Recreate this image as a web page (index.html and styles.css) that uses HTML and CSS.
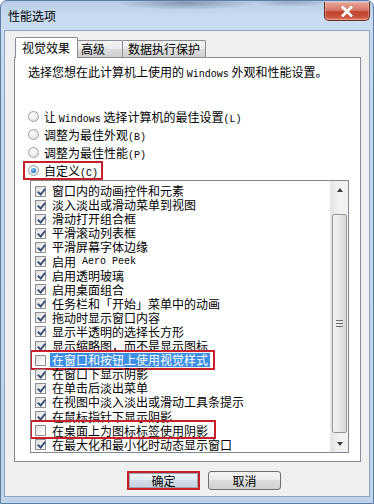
FILE: index.html
```html
<!DOCTYPE html>
<html lang="zh-CN">
<head>
<meta charset="utf-8">
<title>性能选项</title>
<link rel="stylesheet" href="styles.css">
</head>
<body>
<div class="window">
  <div class="titlebar">
    <span class="title">性能选项</span>
    <div class="close">
      <svg width="16" height="11" viewBox="0 0 16 11"><path d="M4 1.5 L12 9.5 M12 1.5 L4 9.5" stroke="#fff" stroke-width="2.8" stroke-linecap="square"/></svg>
    </div>
  </div>
  <div class="client">
    <div class="tabs">
      <div class="tab active">视觉效果</div>
      <div class="tab t2">高级</div>
      <div class="tab t3">数据执行保护</div>
    </div>
    <div class="panel">
      <p class="intro">选择您想在此计算机上使用的 <span class="en">Windows</span> 外观和性能设置。</p>
      <div class="radios">
        <div class="radio-row"><span class="radio"></span><span>让 <span class="en">Windows</span> 选择计算机的最佳设置<span class="en">(L)</span></span></div>
        <div class="radio-row"><span class="radio"></span><span>调整为最佳外观<span class="en">(B)</span></span></div>
        <div class="radio-row"><span class="radio"></span><span>调整为最佳性能<span class="en">(P)</span></span></div>
        <div class="radio-row marked"><span class="radio on"></span><span>自定义<span class="en">(C)</span></span></div>
      </div>
      <div class="listbox">
        <ul class="items">
          <li><span class="cb on"></span>窗口内的动画控件和元素</li>
          <li><span class="cb on"></span>淡入淡出或滑动菜单到视图</li>
          <li><span class="cb on"></span>滑动打开组合框</li>
          <li><span class="cb on"></span>平滑滚动列表框</li>
          <li><span class="cb on"></span>平滑屏幕字体边缘</li>
          <li><span class="cb on"></span>启用 <span class="en">Aero Peek</span></li>
          <li><span class="cb on"></span>启用透明玻璃</li>
          <li><span class="cb on"></span>启用桌面组合</li>
          <li><span class="cb on"></span>任务栏和「开始」菜单中的动画</li>
          <li><span class="cb on"></span>拖动时显示窗口内容</li>
          <li><span class="cb on"></span>显示半透明的选择长方形</li>
          <li><span class="cb on"></span>显示缩略图，而不是显示图标</li>
          <li class="marked"><span class="cb"></span><span class="sel">在窗口和按钮上使用视觉样式</span></li>
          <li><span class="cb on"></span>在窗口下显示阴影</li>
          <li><span class="cb on"></span>在单击后淡出菜单</li>
          <li><span class="cb on"></span>在视图中淡入淡出或滑动工具条提示</li>
          <li><span class="cb on"></span>在鼠标指针下显示阴影</li>
          <li class="marked m2"><span class="cb"></span>在桌面上为图标标签使用阴影</li>
          <li><span class="cb on"></span>在最大化和最小化时动态显示窗口</li>
        </ul>
        <div class="scrollbar">
          <div class="sb-btn"><span class="arrow up"></span></div>
          <div class="sb-track">
            <div class="thumb"><span class="grip"></span></div>
          </div>
          <div class="sb-btn"><span class="arrow down"></span></div>
        </div>
      </div>
    </div>
    <div class="buttons">
      <button class="btn default">确定</button>
      <button class="btn">取消</button>
    </div>
  </div>
</div>
</body>
</html>
```
FILE: styles.css
```css
html, body {
  margin: 0;
  padding: 0;
}
body {
  width: 374px;
  height: 504px;
  overflow: hidden;
  font-family: "Noto Sans CJK SC", "Noto Sans", sans-serif;
  font-size: 12px;
  color: #000;
  background: #fff;
}
.window {
  box-sizing: border-box;
  width: 374px;
  height: 504px;
  border: 1px solid #5d7da6;
  border-radius: 7px 7px 0 0;
  background:
    radial-gradient(ellipse 70px 7px at 185px 2px, rgba(70,85,110,0.45), rgba(70,85,110,0) 100%),
    radial-gradient(ellipse 40px 5px at 290px 1px, rgba(70,85,110,0.3), rgba(70,85,110,0) 100%),
    linear-gradient(to bottom, #b7cde6 0px, #cadcf0 18px, #c3d7ee 60px, #bed3ec 100%);
  padding: 0 3px 6px 3px;
  display: flex;
  flex-direction: column;
}
.titlebar {
  height: 29px;
  display: flex;
  justify-content: space-between;
  align-items: flex-start;
  flex-shrink: 0;
}
.title {
  align-self: center;
  margin-left: 4px;
  line-height: 16px;
  margin-top: 1px;
}
.close {
  margin-top: 1px;
  width: 46px;
  height: 19px;
  box-sizing: border-box;
  border: 1px solid #6e2c25;
  border-top: none;
  border-radius: 0 0 5px 5px;
  background: linear-gradient(to bottom, #e6a699 0%, #d77868 45%, #c2432f 55%, #c9553f 85%, #dc8a6f 100%);
  display: flex;
  align-items: center;
  justify-content: center;
  box-shadow: inset 0 0 0 1px rgba(255,210,200,0.35);
}
.client {
  flex: 1;
  background: #f0f0f0;
  border: 1px solid #8ea4c1;
  padding: 6px 0 0 0;
  display: flex;
  flex-direction: column;
}
.tabs {
  display: flex;
  align-items: flex-end;
  height: 20px;
  margin-left: 10px;
  position: relative;
  z-index: 1;
}
.tab {
  box-sizing: border-box;
  height: 17px;
  border: 1px solid #898c95;
  border-bottom: none;
  border-radius: 2px 2px 0 0;
  line-height: 15px;
  background: linear-gradient(to bottom, #f3f3f3 0%, #ebebeb 50%, #dddddd 50%, #cfcfcf 100%);
  white-space: nowrap;
}
.tab.active {
  height: 21px;
  width: 63px;
  margin-bottom: -1px;
  background: #fff;
  padding-left: 6px;
  line-height: 20px;
}
.tab.t2 {
  width: 46px;
  margin-left: -1px;
  padding-left: 3px;
}
.tab.t3 {
  width: 84px;
  margin-left: -1px;
  padding-left: 5px;
}
.panel {
  box-sizing: border-box;
  height: 405px;
  margin: 0 8px 0 9px;
  border: 1px solid #898c95;
  background: #fff;
  display: flex;
  flex-direction: column;
  flex-shrink: 0;
}
.intro {
  margin: 6px 0 0 13px;
  line-height: 16px;
  white-space: nowrap;
}
.en {
  font-family: "Liberation Mono", monospace;
  font-size: 10px;
}
.radios {
  margin: 24px 0 0 13px;
  display: flex;
  flex-direction: column;
  align-items: flex-start;
}
.radio-row {
  height: 18px;
  display: flex;
  align-items: center;
  gap: 5px;
  position: relative;
  white-space: nowrap;
}
.radio-row.marked::after {
  content: "";
  position: absolute;
  left: -5px;
  right: -5px;
  top: 0;
  bottom: -1px;
  border: 2px solid #c8202b;
}
.radio {
  box-sizing: border-box;
  width: 11px;
  height: 11px;
  border-radius: 50%;
  border: 1px solid #9a9ea3;
  background: radial-gradient(circle at 40% 35%, #ffffff 0%, #eef0f2 40%, #d6d9dd 100%);
  position: relative;
  flex-shrink: 0;
}
.radio.on::after {
  content: "";
  position: absolute;
  left: 2px;
  top: 2px;
  width: 5px;
  height: 5px;
  border-radius: 50%;
  background: radial-gradient(circle at 40% 35%, #8fd0ff 0%, #2a7bd0 60%, #174f95 100%);
}
.listbox {
  box-sizing: border-box;
  height: 273px;
  margin: 1px 11px 0 15px;
  border: 1px solid #828790;
  display: flex;
  background: #fff;
}
.items {
  flex: 1;
  list-style: none;
  margin: 0;
  padding: 3px 0 0 4px;
  display: flex;
  flex-direction: column;
  align-items: flex-start;
  overflow: hidden;
}
.items li {
  height: 14.1px;
  line-height: 14px;
  display: flex;
  align-items: center;
  gap: 6px;
  position: relative;
  white-space: nowrap;
  flex-shrink: 0;
}
.items li.marked::after {
  content: "";
  position: absolute;
  left: -5px;
  right: -5px;
  top: -3px;
  bottom: -3px;
  border: 2px solid #c8202b;
}
.items li.m2::after {
  top: -4px;
  bottom: -1px;
  right: -8px;
}
.sel {
  background: #3d8fe3;
  color: #fff;
  margin-left: -2px;
  padding: 0 2px;
}
.cb {
  box-sizing: border-box;
  width: 11px;
  height: 11px;
  border: 1px solid #8f8f8f;
  background: linear-gradient(135deg, #dcdcdc 0%, #f4f4f4 60%, #ffffff 100%);
  position: relative;
  flex-shrink: 0;
}
.cb.on::after {
  content: "";
  position: absolute;
  left: 3px;
  top: 0px;
  width: 3px;
  height: 6px;
  border: solid #3f5178;
  border-width: 0 2px 2px 0;
  transform: rotate(40deg);
}
.scrollbar {
  width: 17px;
  display: flex;
  flex-direction: column;
  background: linear-gradient(to right, #e3e3e3, #f1f1f1 40%, #f1f1f1);
  border-left: 1px solid #e8e8e8;
}
.sb-btn {
  height: 17px;
  display: flex;
  align-items: center;
  justify-content: center;
  flex-shrink: 0;
}
.arrow {
  width: 0;
  height: 0;
  border-left: 3.5px solid transparent;
  border-right: 3.5px solid transparent;
}
.arrow.up {
  border-bottom: 4px solid #3c3c3c;
}
.arrow.down {
  border-top: 4px solid #3c3c3c;
}
.sb-track {
  flex: 1;
  padding: 16px 1px 2px 1px;
  display: flex;
  flex-direction: column;
}
.thumb {
  box-sizing: border-box;
  height: 219px;
  border: 1px solid #979797;
  border-radius: 2px;
  background: linear-gradient(to right, #f4f4f4, #e6e6e6 50%, #d6d6d6);
  display: flex;
  align-items: center;
  justify-content: center;
}
.grip {
  width: 7px;
  height: 7px;
  background: repeating-linear-gradient(to bottom, #6f6f6f 0px, #6f6f6f 1px, transparent 1px, transparent 3px);
}
.buttons {
  display: flex;
  gap: 8px;
  padding: 9px 0 0 122px;
}
.btn {
  box-sizing: border-box;
  width: 73px;
  height: 19px;
  padding: 0;
  font-family: "Noto Sans CJK SC", sans-serif;
  font-size: 12px;
  line-height: 16px;
  color: #000;
  border: 1px solid #707070;
  border-radius: 3px;
  background: linear-gradient(to bottom, #f2f2f2 0%, #ebebeb 50%, #dddddd 50%, #cfcfcf 100%);
}
.btn.default {
  border: 2px solid #c8202b;
  border-radius: 0;
  box-shadow: inset 0 0 0 1px #9aa6b4;
  background: linear-gradient(to bottom, #eef4fa 0%, #e3ebf3 50%, #d3dde8 50%, #c8d3df 100%);
}
```
